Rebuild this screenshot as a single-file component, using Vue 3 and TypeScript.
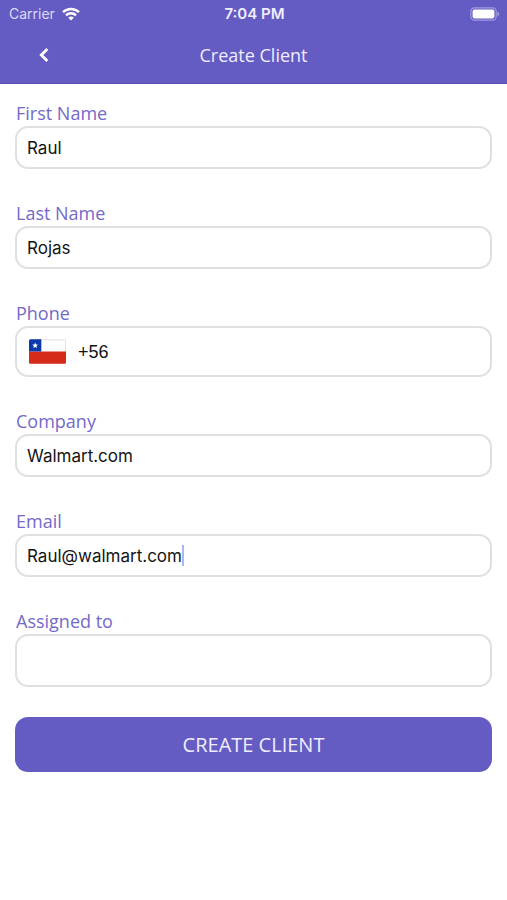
<script setup lang="ts">
import { reactive } from 'vue'

interface Client {
  firstName: string
  lastName: string
  phone: string
  company: string
  email: string
  assignee: string
}

const client = reactive<Client>({
  firstName: 'Raul',
  lastName: 'Rojas',
  phone: '+56',
  company: 'Walmart.com',
  email: 'Raul@walmart.com',
  assignee: '',
})
</script>

<template>
  <div class="screen">
    <header class="top">
      <div class="status">
        <div class="carrier">
          <span>Carrier</span>
          <svg class="wifi" viewBox="0 0 18 14" aria-hidden="true">
            <path d="M1 5.2a11.6 11.6 0 0 1 16 0" />
            <path d="M4 8.3a7.2 7.2 0 0 1 10 0" />
            <path class="dot" d="M9 13.6 6.2 10.8a4 4 0 0 1 5.6 0Z" />
          </svg>
        </div>
        <span class="time">7:04 PM</span>
        <svg class="battery" viewBox="0 0 30 14" aria-hidden="true">
          <rect class="shell" x="0.8" y="0.8" width="25.4" height="12.4" rx="3.6" />
          <rect class="charge" x="2.6" y="2.6" width="21.8" height="8.8" rx="1.8" />
          <path class="tip" d="M27.4 4.8c2.4.7 2.4 3.7 0 4.4Z" />
        </svg>
      </div>
      <nav class="bar">
        <button class="back" type="button" aria-label="Back">
          <svg viewBox="0 0 10 16" aria-hidden="true"><path d="M8.300 2 2.300 8 8.300 14" /></svg>
        </button>
        <h1>Create Client</h1>
      </nav>
    </header>

    <form class="form" @submit.prevent>
      <div class="field">
        <label for="first-name">First Name</label>
        <input id="first-name" v-model="client.firstName" class="box" type="text" />
      </div>
      <div class="field">
        <label for="last-name">Last Name</label>
        <input id="last-name" v-model="client.lastName" class="box" type="text" />
      </div>
      <div class="field">
        <label for="phone">Phone</label>
        <div class="box phone">
          <button class="country" type="button" aria-label="Chile">
            <svg viewBox="0 0 36 24" aria-hidden="true">
              <rect class="flag-white" x="0.5" y="0.5" width="35" height="23" rx="1.5" />
              <path class="flag-red" d="M0 12h36v10.500a1.500 1.500 0 0 1-1.500 1.500h-33a1.500 1.500 0 0 1-1.500-1.500Z" />
              <path class="flag-blue" d="M1.500 0H12v12H0V1.500A1.500 1.500 0 0 1 1.500 0Z" />
              <path class="flag-star" d="m6 3.300.8 1.800 2 .2-1.500 1.300.5 2L6 7.600 4.200 8.600l.5-2-1.500-1.300 2-.2Z" />
            </svg>
          </button>
          <input id="phone" v-model="client.phone" type="tel" />
        </div>
      </div>
      <div class="field">
        <label for="company">Company</label>
        <input id="company" v-model="client.company" class="box" type="text" />
      </div>
      <div class="field">
        <label for="email">Email</label>
        <div class="box email">
          <input id="email" v-model="client.email" type="email" />
          <span class="caret"></span>
        </div>
      </div>
      <div class="field">
        <label for="assignee">Assigned to</label>
        <input id="assignee" v-model="client.assignee" class="box tall" type="text" />
      </div>
      <button class="submit" type="submit">CREATE CLIENT</button>
    </form>
  </div>
</template>

<style>
body {
  background: #fff;
}
</style>

<style scoped>
.screen {
  font-family: "Open Sans", sans-serif;
}
.top {
  background: #655cc3;
  border-bottom: 1px solid #5a50b4;
  color: #efedff;
}
.status {
  display: grid;
  grid-template-columns: 1fr auto 1fr;
  align-items: center;
  height: 27px;
  padding: 0 7px 0 9px;
  font: 14px/27px Inter, sans-serif;
}
.carrier {
  display: flex;
  align-items: center;
  gap: 7px;
  color: #dddaf8;
}
.wifi {
  width: 18px;
  height: 14px;
  fill: none;
  stroke: #fff;
  stroke-width: 2.4;
}
.wifi .dot {
  fill: #fff;
  stroke: none;
}
.time {
  font-size: 15px;
  font-weight: 600;
}
.battery {
  justify-self: end;
  width: 30px;
  height: 14px;
}
.shell {
  fill: none;
  stroke: #a29be0;
  stroke-width: 1.2;
}
.charge {
  fill: #fff;
}
.tip {
  fill: #a29be0;
}
.bar {
  display: grid;
  grid-template-columns: 56px 1fr 56px;
  align-items: center;
  height: 56px;
  padding: 0 16px;
}
.back {
  display: flex;
  justify-content: center;
  align-items: center;
  height: 44px;
  padding: 0;
  border: 0;
  background: none;
}
.back svg {
  width: 10px;
  height: 16px;
  fill: none;
  stroke: #fff;
  stroke-width: 2.8;
}
h1 {
  margin: 0;
  font-size: 18px;
  font-weight: 400;
  line-height: 24px;
  text-align: center;
}
.form {
  display: flex;
  flex-direction: column;
  gap: 33px;
  padding: 18px 15px;
}
.field {
  display: flex;
  flex-direction: column;
}
label {
  padding: 0 1px 2px;
  color: #7369c9;
  font-size: 18px;
  line-height: 22px;
}
input {
  min-width: 0;
  margin: 0;
  padding: 0;
  border: 0;
  outline: 0;
  background: none;
  color: #141414;
  font: 17px/24px Inter, sans-serif;
}
.box {
  box-sizing: border-box;
  width: 100%;
  height: 43px;
  padding: 0 10px;
  border: 2px solid #dee0e1;
  border-radius: 13px;
  background: #fff;
}
.box.tall {
  height: 53px;
}
.phone {
  display: flex;
  align-items: center;
  gap: 12px;
  height: 51px;
  padding: 0 12px;
}
.phone input {
  flex: 1;
  font: 18px/24px "Liberation Sans", sans-serif;
}
.country {
  display: flex;
  padding: 0;
  border: 0;
  background: none;
}
.country svg {
  width: 37px;
  height: 25px;
}
.flag-white {
  fill: #fff;
  stroke: #e2e2e4;
}
.flag-red {
  fill: #d52b1a;
}
.flag-blue {
  fill: #0b39a8;
}
.flag-star {
  fill: #fff;
}
.email {
  display: flex;
  align-items: center;
}
.email input {
  field-sizing: content;
  max-width: 100%;
}
.caret {
  flex: none;
  width: 2px;
  height: 21px;
  background: #a9b8f5;
}
.submit {
  height: 55px;
  margin-top: -3px;
  border: 0;
  border-radius: 13px;
  background: #655cc3;
  color: #efedff;
  font: 20px/26px "Open Sans", sans-serif;
}
</style>
